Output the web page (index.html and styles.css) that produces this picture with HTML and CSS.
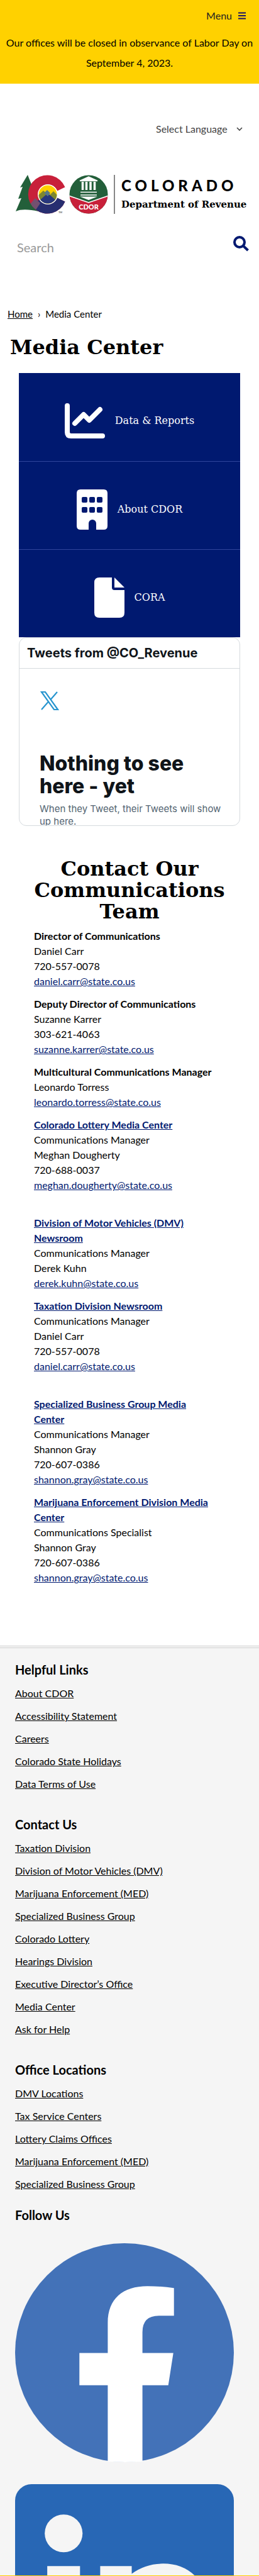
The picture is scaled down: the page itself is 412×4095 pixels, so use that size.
FILE: index.html
```html
<!DOCTYPE html>
<html lang="en">
<head>
<meta charset="utf-8">
<meta name="viewport" content="width=device-width, initial-scale=1">
<title>Media Center | Colorado Department of Revenue</title>
<link rel="stylesheet" href="styles.css">
</head>
<body>
<div class="topbar">
  <button class="menu-button" type="button">Menu
    <svg width="12" height="12" viewBox="0 0 12 12" aria-hidden="true"><path d="M0 1.5h12M0 6h12M0 10.5h12" stroke="#1b1464" stroke-width="2"/></svg>
  </button>
  <p class="notice">Our offices will be closed in observance of Labor Day on September 4, 2023.</p>
</div>

<header class="header">
  <div class="language">
    <select class="language-select" aria-label="Language"><option>Select Language</option></select>
    <svg class="chevron" width="10" height="6" viewBox="0 0 10 6" aria-hidden="true"><path d="M1 1l4 4 4-4" fill="none" stroke="#444" stroke-width="1.6"/></svg>
  </div>
  <a class="brand" href="#" aria-label="Colorado Department of Revenue">
    <svg class="brand-marks" width="148" height="62" viewBox="0 0 148 62" aria-hidden="true">
      <defs>
        <clipPath id="sun"><circle cx="51" cy="31" r="14.5"/></clipPath>
        <clipPath id="seal"><circle cx="116" cy="31" r="30.5"/></clipPath>
        <clipPath id="cring"><path d="M78.500 19.500A30.500 30.500 0 1 0 78.500 42.500L66 36.500A15.500 15.500 0 1 1 66 25.500Z"/></clipPath>
      </defs>
      <path d="M19 0L7 20l4-1-7 19 5-1L0 58c9-4 22-3 36 0L39 29 27 20Z" fill="#235f3a"/>
      <path d="M78.500 19.500A30.500 30.500 0 1 0 78.500 42.500L66 36.500A15.500 15.500 0 1 1 66 25.500Z" fill="#c8203a"/>
      <g clip-path="url(#cring)">
        <path d="M30 62V44l12-7 9 10 15-11h20v26Z" fill="#272e70"/>
        <path d="M20 50l11-13 8 8-10 15Z" fill="#73506f"/>
      </g>
      <circle cx="51" cy="31" r="16" fill="#fff"/>
      <g clip-path="url(#sun)">
        <path d="M36 16h30v30H36Z" fill="#ffd000"/>
        <path d="M34 34l10-9 9 8 7-7 9 9v13H34Z" fill="#7f872f"/>
        <path d="M33 45l18-16 18 16v5H33Z" fill="#28377d"/>
        <path d="M45 29l5-5 5 5-4 5Z" fill="#597987"/>
      </g>
      <text class="trademark" x="68" y="61">TM</text>
      <circle cx="116" cy="31" r="30.500" fill="#235f3a"/>
      <g clip-path="url(#seal)"><path d="M84 33l32 11 32-11v30H84Z" fill="#c8203a"/><path d="M84 33l32 11 32-11" fill="none" stroke="#fff" stroke-width="1.500"/></g>
      <path d="M102 9.500L116 3l14 6.500H102ZM103 27.500h26M103 32h26" fill="#fff" stroke="#fff" stroke-width="1.500"/>
      <path d="M106.500 11v13M112.500 11v13M119 11v13M125.500 11v13" stroke="#fff" stroke-width="3.500"/>
      <path d="M102 34.500h28L116 40Z" fill="#fff"/>
      <text class="seal-text" x="116" y="55" text-anchor="middle">CDOR</text>
    </svg>
    <span class="brand-words"><span class="brand-state">COLORADO</span><span class="brand-dept">Department of Revenue</span></span>
  </a>
  <form class="search">
    <input class="search-input" type="search" placeholder="Search" aria-label="Search">
    <button class="search-button" type="submit" aria-label="Submit search">
      <svg width="26" height="25" viewBox="0 0 26 25" aria-hidden="true"><circle cx="10" cy="10" r="8" fill="none" stroke="#001970" stroke-width="4"/><path d="M16 16l7.500 7" stroke="#001970" stroke-width="4"/></svg>
    </button>
  </form>
</header>

<main>
  <nav class="breadcrumb" aria-label="Breadcrumb"><a href="#">Home</a><span>›</span><span>Media Center</span></nav>
  <h1 class="page-title">Media Center</h1>

  <section class="panels">
    <a class="tile" href="#">
      <svg width="64" height="56" viewBox="0 0 64 56" aria-hidden="true"><path d="M4 4v42q0 6 6 6h50M16 32l14-14 9 9 17-17" fill="none" stroke="#fff" stroke-width="8" stroke-linecap="round" stroke-linejoin="round"/></svg>
      <span>Data &amp; Reports</span>
    </a>
    <a class="tile" href="#">
      <svg width="49" height="64" viewBox="0 0 49 64" aria-hidden="true"><path d="M6 0h37q6 0 6 6v52q0 6-6 6H31V54a6 6 0 0 0-12 0v10H6q-6 0-6-6V6q0-6 6-6Z" fill="#fff"/><g fill="#001970"><rect x="8" y="12" width="9" height="9" rx="2"/><rect x="20" y="12" width="9" height="9" rx="2"/><rect x="32" y="12" width="9" height="9" rx="2"/><rect x="8" y="28" width="9" height="9" rx="2"/><rect x="20" y="28" width="9" height="9" rx="2"/><rect x="32" y="28" width="9" height="9" rx="2"/></g></svg>
      <span>About CDOR</span>
    </a>
    <a class="tile" href="#">
      <svg width="48" height="64" viewBox="0 0 48 64" aria-hidden="true"><path d="M8 0h20v16q0 4 4 4h16v36q0 8-8 8H8q-8 0-8-8V8q0-8 8-8ZM32 0l16 16H32Z" fill="#fff"/></svg>
      <span>CORA</span>
    </a>
    <section class="tweets">
      <h2 class="tweets-title">Tweets from @CO_Revenue</h2>
      <div class="tweets-body">
        <svg width="32" height="32" viewBox="0 0 32 32" aria-label="X" role="img"><path d="M3 2h6l20 28h-6ZM28 2L18 13.500M13.500 18L3 30" fill="none" stroke="#2795cf" stroke-width="2.200"/></svg>
        <h3 class="empty-title">Nothing to see here - yet</h3>
        <p class="empty-text">When they Tweet, their Tweets will show up here.</p>
      </div>
    </section>
  </section>

  <section class="contacts">
    <h2 class="contacts-title">Contact Our Communications Team</h2>
    <div class="contact-list">
      <p><strong>Director of Communications</strong><br>Daniel Carr<br>720-557-0078<br><a href="mailto:daniel.carr@state.co.us">daniel.carr@state.co.us</a></p>
      <p><strong>Deputy Director of Communications</strong><br>Suzanne Karrer<br>303-621-4063<br><a href="mailto:suzanne.karrer@state.co.us">suzanne.karrer@state.co.us</a></p>
      <p><strong>Multicultural Communications Manager</strong><br>Leonardo Torress<br><a href="mailto:leonardo.torress@state.co.us">leonardo.torress@state.co.us</a></p>
      <p class="group-end"><a href="#"><strong>Colorado Lottery Media Center</strong></a><br>Communications Manager<br>Meghan Dougherty<br>720-688-0037<br><a href="mailto:meghan.dougherty@state.co.us">meghan.dougherty@state.co.us</a></p>
      <p><a href="#"><strong>Division of Motor Vehicles (DMV) Newsroom</strong></a><br>Communications Manager<br>Derek Kuhn<br><a href="mailto:derek.kuhn@state.co.us">derek.kuhn@state.co.us</a></p>
      <p class="group-end"><a href="#"><strong>Taxation Division Newsroom</strong></a><br>Communications Manager<br>Daniel Carr<br>720-557-0078<br><a href="mailto:daniel.carr@state.co.us">daniel.carr@state.co.us</a></p>
      <p><a href="#"><strong>Specialized Business Group Media Center</strong></a><br>Communications Manager<br>Shannon Gray<br>720-607-0386<br><a href="mailto:shannon.gray@state.co.us">shannon.gray@state.co.us</a></p>
      <p><a href="#"><strong>Marijuana Enforcement Division Media Center</strong></a><br>Communications Specialist<br>Shannon Gray<br>720-607-0386<br><a href="mailto:shannon.gray@state.co.us">shannon.gray@state.co.us</a></p>
    </div>
  </section>
</main>

<footer class="footer">
  <h2>Helpful Links</h2>
  <ul class="links">
    <li><a href="#">About CDOR</a></li>
    <li><a href="#">Accessibility Statement</a></li>
    <li><a href="#">Careers</a></li>
    <li><a href="#">Colorado State Holidays</a></li>
    <li><a href="#">Data Terms of Use</a></li>
  </ul>
  <h2>Contact Us</h2>
  <ul class="links">
    <li><a href="#">Taxation Division</a></li>
    <li><a href="#">Division of Motor Vehicles (DMV)</a></li>
    <li><a href="#">Marijuana Enforcement (MED)</a></li>
    <li><a href="#">Specialized Business Group</a></li>
    <li><a href="#">Colorado Lottery</a></li>
    <li><a href="#">Hearings Division</a></li>
    <li><a href="#">Executive Director’s Office</a></li>
    <li><a href="#">Media Center</a></li>
    <li><a href="#">Ask for Help</a></li>
  </ul>
  <h2>Office Locations</h2>
  <ul class="links links-last">
    <li><a href="#">DMV Locations</a></li>
    <li><a href="#">Tax Service Centers</a></li>
    <li><a href="#">Lottery Claims Offices</a></li>
    <li><a href="#">Marijuana Enforcement (MED)</a></li>
    <li><a href="#">Specialized Business Group</a></li>
  </ul>
  <h2>Follow Us</h2>
  <div class="social">
    <a href="#" aria-label="Facebook"><svg viewBox="0 0 347 347" aria-hidden="true"><circle cx="173.500" cy="173.500" r="173.500" fill="#4372b8"/><path d="M147 346V225h-45v-51h45v-48c0-38 24-58 63-58q20 0 42 3v44h-24q-26 0-26 26v33h49l-8 51h-41v121q-27 2-55 0Z" fill="#fff"/></svg></a>
    <a href="#" aria-label="LinkedIn"><svg viewBox="0 0 347 145" aria-hidden="true"><rect width="347" height="347" rx="26" fill="#2867b5"/><g fill="#f5f5f5"><circle cx="77" cy="78" r="30"/><path d="M51 130h52v20H51ZM135 130h50v12q22-16 50-16 30 0 50 19v5H135Z"/></g></svg></a>
  </div>
</footer>
</body>
</html>
```

FILE: styles.css
```css
* { box-sizing: border-box; }

body {
  margin: 0;
  background: #fff;
  color: #000;
  font-family: "Trebuchet MS", Lato, sans-serif;
  font-size: 16px;
  line-height: 24px;
}

h1, h2, h3, p, ul { margin: 0; }
svg { display: block; flex-shrink: 0; }
button, input, select { font: inherit; border: 0; background: none; padding: 0; }

.topbar {
  display: flex;
  flex-direction: column;
  padding: 13px 0 17px;
  background: #ffd100;
}

.menu-button {
  display: flex;
  align-items: center;
  align-self: flex-end;
  gap: 10px;
  margin: 0 21px 15px 0;
  color: #222;
}

.notice {
  text-align: center;
  line-height: 32px;
}

.header { padding: 58px 15px 0 25px; }

.language {
  display: flex;
  justify-content: flex-end;
  align-items: center;
  gap: 14px;
  padding-right: 11px;
  height: 28px;
}

.language-select {
  appearance: none;
  color: #444;
}

.brand {
  display: flex;
  align-items: center;
  margin-top: 59px;
  color: #000;
  text-decoration: none;
}

.brand-words {
  display: flex;
  flex-direction: column;
  gap: 8px;
  margin-left: 8px;
  padding: 5px 0 5px 10px;
  border-left: 2px solid #888;
  white-space: nowrap;
}

.brand-state {
  font: 900 24px/24px Lato, sans-serif;
  letter-spacing: 6px;
}

.brand-dept { font: bold 15px/20px "DejaVu Serif", serif; }
.trademark { font: 4px Lato, sans-serif; }
.seal-text { font: 900 11px Lato, sans-serif; fill: #fff; }

.search {
  display: flex;
  margin-top: 35px;
}

.search-input {
  flex: 1;
  min-width: 0;
  height: 36px;
  padding: 0 2px;
  font-size: 20px;
}

.search-input::placeholder { color: #999; }
.search-button { align-self: flex-start; }

.breadcrumb {
  display: flex;
  gap: 8px;
  padding: 76px 12px 0;
  font-size: 15px;
}

.breadcrumb a { color: #000; }

.page-title {
  padding: 20px 16px;
  font: bold 32px/42px "DejaVu Serif", serif;
}

.panels { padding: 0 30px; }

.tile {
  display: flex;
  align-items: center;
  justify-content: center;
  gap: 16px;
  height: 140px;
  padding-top: 12px;
  background: #001970;
  color: #fff;
  font: 16px/24px "DejaVu Serif", serif;
  text-decoration: none;
}

.tile + .tile { border-top: 1px solid #30459c; }

.tweets {
  height: 300px;
  overflow: hidden;
  border: 1px solid #d5dade;
  border-radius: 12px;
  color: #0f1419;
  font-family: Inter, sans-serif;
}

.tweets-title {
  padding: 12px;
  border-bottom: 1px solid #d5dade;
  font-size: 20px;
  line-height: 24px;
}

.tweets-body { padding: 35px 16px 0 32px; }

.empty-title {
  max-width: 260px;
  margin-top: 66px;
  font-size: 32px;
  font-weight: 800;
  line-height: 36px;
}

.empty-text {
  margin-top: 8px;
  color: #536471;
  font-size: 15px;
  line-height: 20px;
}

.contacts { padding: 51px 54px 96px; }

.contacts-title {
  margin: 0 -10px 10px;
  font: bold 32px/34px "DejaVu Serif", serif;
  text-align: center;
}

.contact-list {
  display: flex;
  flex-direction: column;
  gap: 12px;
  padding-right: 16px;
}

.contact-list a { color: #001970; }
.group-end { padding-bottom: 24px; }

.footer {
  padding: 20px 40px 0 24px;
  border-top: 4px double #d2d2d2;
  border-bottom: 1px solid #ffd100;
  background: #f5f5f5;
}

.footer h2 {
  font-size: 20px;
  line-height: 28px;
}

.links {
  padding: 6px 0 32px;
  list-style: none;
}

.links li { padding: 6px 0; }
.links a { color: #000; }
.links-last { padding-bottom: 17px; }

.social {
  display: flex;
  flex-direction: column;
  gap: 35px;
  padding-top: 31px;
}

.social svg { width: 100%; }
```
